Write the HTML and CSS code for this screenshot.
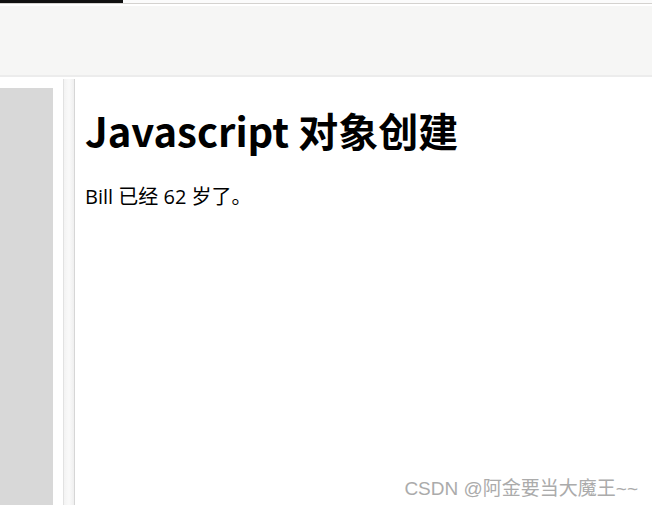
FILE: index.html
```html
<!DOCTYPE html>
<html lang="zh">
<head>
    <meta charset="UTF-8">
    <title>Javascript 对象创建</title>
    <link rel="stylesheet" href="styles.css">
</head>
<body>
    <div class="topstrip"><span class="tab-dark"></span></div>
    <div class="toolbar"></div>
    <div class="workspace">
        <div class="side">
            <div class="side-panel"></div>
        </div>
        <div class="splitter"></div>
        <div class="preview">
            <h1 class="title">Javascript 对象创建</h1>
            <p class="result">Bill 已经 62 岁了。</p>
            <div class="watermark">CSDN @阿金要当大魔王~~</div>
        </div>
    </div>
</body>
</html>
```

FILE: styles.css
```css
html, body {
    margin: 0;
    height: 100%;
}
body {
    display: flex;
    flex-direction: column;
    background: #fff;
    font-family: "Noto Sans CJK SC", "Noto Sans", sans-serif;
    overflow: hidden;
}
.topstrip {
    height: 3px;
    background: #fbfbfb;
    border-bottom: 1px solid #d4d2cf;
}
.tab-dark {
    display: block;
    width: 123px;
    height: 3px;
    background: #111;
}
.toolbar {
    height: 69px;
    margin-top: 2px;
    background: #f6f6f5;
    border-bottom: 2px solid #ececec;
}
.workspace {
    flex: 1;
    display: flex;
    margin-top: 2px;
}
.side {
    width: 63px;
    padding-top: 9px;
}
.side-panel {
    width: 53px;
    height: 100%;
    background: #d8d8d8;
}
.splitter {
    width: 10px;
    border-left: 1px solid #e2e2e2;
    border-right: 1px solid #d6d6d6;
    background: linear-gradient(to right, #f3f3f3, #fafafa, #efefef);
}
.preview {
    flex: 1;
    position: relative;
    padding: 0 10px;
}
.title {
    margin: 23px 0 0;
    font-size: 40px;
    line-height: 56px;
    font-weight: bold;
    color: #000;
}
.result {
    margin: 26px 0 0;
    font-family: "Open Sans", "Noto Sans CJK SC", sans-serif;
    font-size: 20px;
    line-height: 26px;
    color: #000;
}
.watermark {
    position: absolute;
    right: 14px;
    bottom: 5px;
    font-family: "Liberation Sans", "Noto Sans CJK SC", sans-serif;
    font-size: 19px;
    color: #ababab;
}
```
